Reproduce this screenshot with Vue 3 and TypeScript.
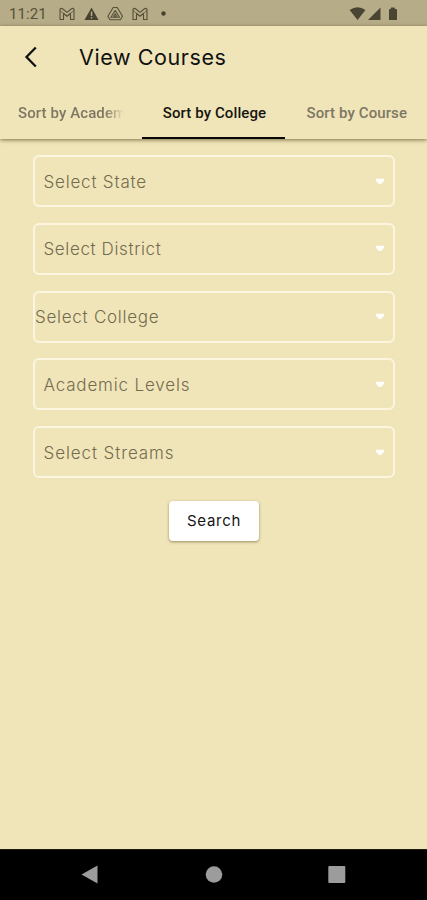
<script setup lang="ts">
interface Field {
  label: string
  kind: string
}

const tabs = [
  { label: 'Sort by Academic', kind: 'clipped' },
  { label: 'Sort by College', kind: 'active' },
  { label: 'Sort by Course', kind: 'plain' },
]

const fields: Field[] = [
  { label: 'Select State', kind: 'state' },
  { label: 'Select District', kind: 'district' },
  { label: 'Select College', kind: 'college' },
  { label: 'Academic Levels', kind: 'levels' },
  { label: 'Select Streams', kind: 'streams' },
]
</script>

<template>
  <div class="screen">
    <div class="status">
      <span class="clock">11:21</span>
      <svg class="notices" width="110" height="16" viewBox="0 0 110 16">
        <g fill="none" stroke="#565039" stroke-width="1.1" stroke-linejoin="round">
          <path d="M1 13.500V3.200Q2 1.800 3.500 2.800L8 6.400l4.500-3.600Q14 1.800 15 3.200V13.500H11.500V7.500L8 10.300 4.500 7.500V13.500Z" />
          <path d="M1 4.500L8 10l7-5.500" stroke-width=".7" />
          <g transform="translate(73 0)">
            <path d="M1 13.500V3.200Q2 1.800 3.500 2.800L8 6.400l4.500-3.600Q14 1.800 15 3.200V13.500H11.500V7.500L8 10.300 4.500 7.500V13.500Z" />
            <path d="M1 4.500L8 10l7-5.500" stroke-width=".7" />
          </g>
          <path d="M54.200 1.500h4L63.500 10.200l-2.200 3.600H51.100L48.900 10.200Z" />
          <path d="M56.200 4.500L60.500 11.300H51.900Z" />
          <path d="M56.200 7.800L57.800 10.300H54.600Z" />
        </g>
        <path d="M32.500 1.500L39.500 14H25.500Z" fill="#474130" />
        <path d="M31.800 5.500h1.500V10h-1.500ZM31.800 11h1.500v1.500h-1.500Z" fill="#b6ac88" />
        <circle cx="104.500" cy="7.500" r="2.200" fill="#474130" />
      </svg>
      <svg class="system" width="50" height="16" viewBox="0 0 50 16" fill="#4a4433">
        <path d="M.6 4Q8.600-1.600 16.500 4L8.600 14Z" />
        <path d="M31.500 1.500V14H19Z" />
        <path d="M40 3.500L42 2.500V1.500h3.500V2.500L48 3.500V14h-8Z" />
      </svg>
    </div>
    <header class="app-bar">
      <div class="title-row">
        <svg class="back" width="14" height="22" viewBox="0 0 14 22" fill="none" stroke="#111" stroke-width="2.300">
          <path d="M11.800 1.500L2.500 11l9.300 9.500" />
        </svg>
        <h1>View Courses</h1>
      </div>
      <nav class="tabs">
        <div v-for="tab in tabs" :key="tab.label" class="tab" :class="tab.kind">
          <span>{{ tab.label }}</span>
        </div>
      </nav>
    </header>
    <main>
      <div v-for="field in fields" :key="field.label" class="field" :class="field.kind">
        <span>{{ field.label }}</span>
        <svg width="10" height="7" viewBox="0 0 10 7"><path d="M1 .8h8v2L6.200 6H3.800L1 2.800Z" fill="#fffefa" /></svg>
      </div>
      <button type="button">Search</button>
    </main>
    <footer>
      <svg width="427" height="50" viewBox="0 0 427 50" fill="#9c9c9c">
        <path d="M81.500 24.500L97.500 15.500V33.500Z" />
        <circle cx="214" cy="24.500" r="8.300" />
        <rect x="328.300" y="16" width="17" height="17" rx="1" />
      </svg>
    </footer>
  </div>
</template>

<style>
body {
  margin: 0;
  background: #f0e5b9;
}
</style>

<style scoped>
.screen {
  display: flex;
  flex-direction: column;
  width: 427px;
  height: 900px;
  overflow: hidden;
  background: #f0e5b9;
  font-family: Inter, "Liberation Sans", sans-serif;
}
.status {
  display: flex;
  align-items: center;
  height: 26px;
  padding: 1px 28px 0 9px;
  box-sizing: border-box;
  background: #b6ac88;
}
.clock {
  width: 50px;
  font: 400 15px/20px Roboto, sans-serif;
  letter-spacing: 0.1px;
  color: #565039;
}
.system {
  margin-left: auto;
}
.app-bar {
  height: 113px;
  box-shadow: 0 1px 4px rgba(60, 50, 10, 0.65);
}
.title-row {
  display: flex;
  align-items: center;
  height: 62px;
  padding-left: 24px;
}
h1 {
  margin: 0 0 1px 41px;
  font-size: 21.500px;
  font-weight: 400;
  letter-spacing: 0.580px;
  color: #111;
}
.tabs {
  display: flex;
  height: 51px;
}
.tab {
  flex: 1;
  padding: 14.500px 18px 0;
  box-sizing: border-box;
  min-width: 0;
  text-align: center;
  font: 500 15px/20px Roboto, sans-serif;
  letter-spacing: 0.1px;
  color: #7e7764;
}
.tab span {
  display: block;
  margin-right: -2px;
  overflow: hidden;
  white-space: nowrap;
}
.clipped span {
  margin-right: 0;
  mask-image: linear-gradient(to right, #000 82%, transparent);
}
.active {
  color: #171510;
  border-bottom: 2px solid #080808;
}
main {
  flex: 1;
  display: flex;
  flex-direction: column;
  align-items: center;
  gap: 15.800px;
  padding: 16px 32px 0 33px;
}
.field {
  display: flex;
  align-items: center;
  justify-content: space-between;
  width: 100%;
  height: 52px;
  padding: 0 8px 0 8.500px;
  box-sizing: border-box;
  border: 2px solid #fcf5df;
  border-radius: 6px;
  font-size: 17px;
  font-weight: 300;
  color: #746b4f;
}
.field span {
  padding-top: 1px;
}
.state {
  letter-spacing: 0.800px;
}
.district {
  letter-spacing: 0.620px;
}
.college {
  padding-left: 0;
  letter-spacing: 0.730px;
}
.levels {
  letter-spacing: 0.830px;
}
.streams {
  letter-spacing: 0.900px;
}
button {
  width: 90px;
  height: 40px;
  margin-top: 7px;
  padding: 0;
  border: 0;
  border-radius: 4px;
  background: #fff;
  box-shadow: 0 1px 3px rgba(80, 65, 20, 0.55);
  font: 400 15px/20px Inter, sans-serif;
  letter-spacing: 0.700px;
  color: #151515;
}
footer {
  height: 51px;
  box-sizing: border-box;
  border-top: 1px solid #1d1b12;
  background: #000;
}
footer svg {
  display: block;
}
</style>
